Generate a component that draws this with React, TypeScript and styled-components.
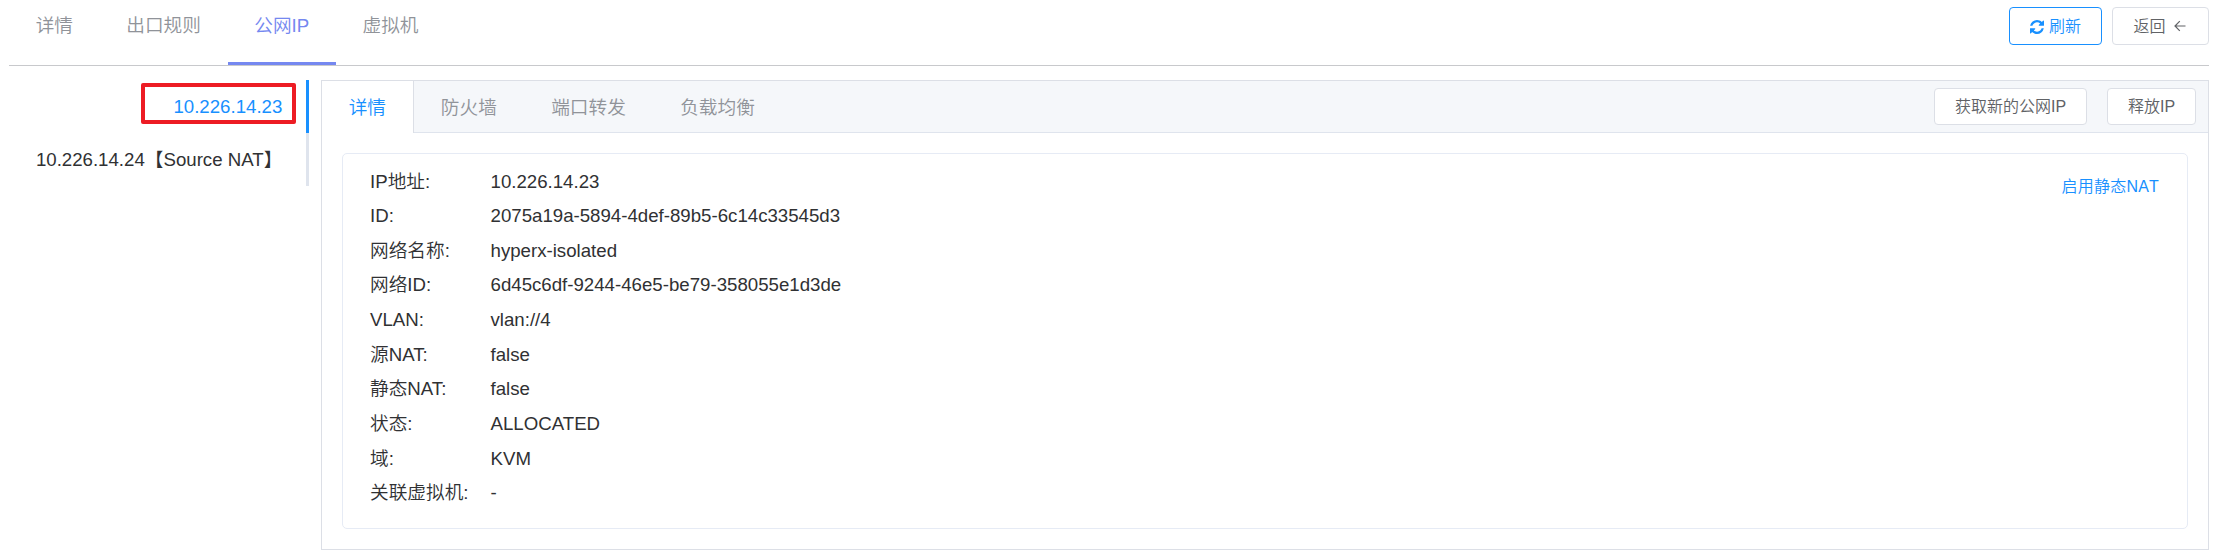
import React from "react";
import styled, { createGlobalStyle, css } from "styled-components";

const GlobalStyle = createGlobalStyle`
  * { box-sizing: border-box; }
  body {
    margin: 0;
    background: #fff;
    color: #303133;
    font-family: "Liberation Sans", "Noto Sans CJK SC", sans-serif;
    font-size: 18.67px;
    font-weight: 350;
  }
`;

const Page = styled.div`
  height: 559px;
  padding: 0 8px 0 9px;
  overflow: hidden;
`;

const TopBar = styled.header`
  display: flex;
  justify-content: space-between;
  height: 66px;
  border-bottom: 1px solid #c8c9cc;
`;

const TopTabs = styled.nav`
  display: flex;
`;

const TopTab = styled.a<{ $active?: boolean }>`
  height: 65px;
  padding: 0 26.67px;
  line-height: 51px;
  color: ${(p) => (p.$active ? "#7588f0" : "#909399")};
  border-bottom: 3px solid ${(p) => (p.$active ? "#7588f0" : "transparent")};
`;

const TopActions = styled.div`
  display: flex;
  gap: 10px;
  padding-top: 7px;
`;

const Button = styled.button<{ $primary?: boolean; $width: number; $height: number }>`
  display: flex;
  align-items: center;
  justify-content: center;
  width: ${(p) => p.$width}px;
  height: ${(p) => p.$height}px;
  padding: 1px 0 0;
  font: inherit;
  font-size: 16px;
  line-height: 20px;
  white-space: nowrap;
  background: #fff;
  border-radius: 4px;
  ${(p) =>
    p.$primary
      ? css`
          color: #1890ff;
          border: 1px solid #1890ff;
        `
      : css`
          color: #606266;
          border: 1px solid #dcdfe6;
        `}
`;

const RefreshIcon = styled.svg`
  width: 14px;
  height: 14px;
  margin-right: 5px;
`;

const ArrowIcon = styled.svg`
  width: 12px;
  height: 12px;
  margin: 0 2px 1px 8px;
`;

const Body = styled.main`
  display: flex;
  align-items: flex-start;
  gap: 12px;
  padding-top: 14px;
`;

const Sidebar = styled.aside`
  width: 300px;
`;

const AddressItem = styled.div<{ $active?: boolean }>`
  position: relative;
  height: 53px;
  padding-right: 23.67px;
  line-height: 53px;
  text-align: right;
  white-space: nowrap;
  color: ${(p) => (p.$active ? "#1890ff" : "#303133")};
  border-right: 3px solid ${(p) => (p.$active ? "#1890ff" : "#dfe4ed")};
`;

const Highlight = styled.span`
  position: absolute;
  top: 3px;
  right: 10px;
  width: 155px;
  height: 41px;
  border: 4px solid #ed1c24;
  border-radius: 2px;
`;

const Panel = styled.section`
  flex: 1;
  height: 470px;
  border: 1px solid #dcdfe6;
`;

const PanelHeader = styled.div`
  display: flex;
  justify-content: space-between;
  height: 52px;
  background: #f5f7fa;
  border-bottom: 1px solid #dfe4ed;
`;

const PanelTabs = styled.nav`
  display: flex;
`;

const PanelTab = styled.a<{ $active?: boolean }>`
  height: ${(p) => (p.$active ? 52 : 51)}px;
  padding: 0 ${(p) => (p.$active ? 26.67 : 27.2)}px;
  line-height: 53px;
  color: ${(p) => (p.$active ? "#1890ff" : "#909399")};
  ${(p) =>
    p.$active &&
    css`
      background: #fff;
      border-right: 1px solid #dcdfe6;
    `}
`;

const PanelActions = styled.div`
  display: flex;
  gap: 20px;
  padding: 7px 12px 0 0;
`;

const Card = styled.div`
  display: flex;
  justify-content: space-between;
  align-items: flex-start;
  height: 376px;
  margin: 20px 20px 0;
  padding: 10.5px 28px 0 27px;
  border: 1px solid #e6ebf5;
  border-radius: 5px;
`;

const Details = styled.dl`
  display: grid;
  grid-template-columns: 120.5px auto;
  grid-auto-rows: 34.67px;
  margin: 0;
  line-height: 34.67px;
`;

const Label = styled.dt``;

const Value = styled.dd`
  margin: 0;
`;

const Link = styled.a`
  margin-top: 12.5px;
  font-size: 16px;
  line-height: 20px;
  font-kerning: none;
  letter-spacing: 0.2px;
  color: #1890ff;
`;

const topTabs = ["详情", "出口规则", "公网IP", "虚拟机"];
const panelTabs = ["详情", "防火墙", "端口转发", "负载均衡"];
const details = [
  ["IP地址:", "10.226.14.23"],
  ["ID:", "2075a19a-5894-4def-89b5-6c14c33545d3"],
  ["网络名称:", "hyperx-isolated"],
  ["网络ID:", "6d45c6df-9244-46e5-be79-358055e1d3de"],
  ["VLAN:", "vlan://4"],
  ["源NAT:", "false"],
  ["静态NAT:", "false"],
  ["状态:", "ALLOCATED"],
  ["域:", "KVM"],
  ["关联虚拟机:", "-"],
];

export default function App() {
  return (
    <Page>
      <GlobalStyle />
      <TopBar>
        <TopTabs>
          {topTabs.map((t) => (
            <TopTab key={t} $active={t === "公网IP"}>{t}</TopTab>
          ))}
        </TopTabs>
        <TopActions>
          <Button $primary $width={93} $height={38}>
            <RefreshIcon viewBox="0 0 1536 1536" fill="currentColor">
              <path d="M1511 928q0 5-1 7-64 268-268 434.500T764 1536q-146 0-282.500-55T238 1324l-129 129q-19 19-45 19t-45-19-19-45V960q0-26 19-45t45-19h448q26 0 45 19t19 45-19 45l-137 137q71 66 161 102t187 36q134 0 250-65t186-179q11-17 53-117 8-23 30-23h192q13 0 22.500 9.500t9.500 22.500zm25-800v448q0 26-19 45t-45 19h-448q-26 0-45-19t-19-45 19-45l138-138Q969 256 768 256q-134 0-250 65T332 500q-11 17-53 117-8 23-30 23H50q-13 0-22.500-9.500T18 608v-7q65-268 270-434.500T768 0q146 0 284 55.500T1297 212l130-129q19-19 45-19t45 19 19 45z" />
            </RefreshIcon>
            刷新
          </Button>
          <Button $width={97} $height={38}>
            返回
            <ArrowIcon viewBox="0 0 12 12" fill="none" stroke="currentColor" strokeWidth="1.2">
              <path d="M11.500 6H1M5.800 1.200L1 6L5.800 10.800" />
            </ArrowIcon>
          </Button>
        </TopActions>
      </TopBar>
      <Body>
        <Sidebar>
          <AddressItem $active>
            10.226.14.23
            <Highlight />
          </AddressItem>
          <AddressItem>10.226.14.24【Source NAT】</AddressItem>
        </Sidebar>
        <Panel>
          <PanelHeader>
            <PanelTabs>
              {panelTabs.map((t, i) => (
                <PanelTab key={t} $active={i === 0}>{t}</PanelTab>
              ))}
            </PanelTabs>
            <PanelActions>
              <Button $width={153} $height={37}>获取新的公网IP</Button>
              <Button $width={89} $height={37}>释放IP</Button>
            </PanelActions>
          </PanelHeader>
          <Card>
            <Details>
              {details.map(([label, value]) => (
                <React.Fragment key={label}>
                  <Label>{label}</Label>
                  <Value>{value}</Value>
                </React.Fragment>
              ))}
            </Details>
            <Link>启用静态NAT</Link>
          </Card>
        </Panel>
      </Body>
    </Page>
  );
}
